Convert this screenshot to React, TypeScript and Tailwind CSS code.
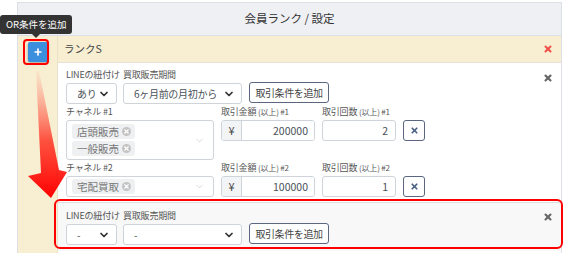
import React from 'react';
import { X, ChevronDown, Plus } from 'lucide-react';

const font = { fontFamily: '"Noto Sans CJK JP", "Noto Sans", sans-serif' };

function Label({ children }: { children: React.ReactNode }) {
  return <div className="text-[9px] leading-[12px] text-[#555] mb-[2px] whitespace-nowrap tracking-[-0.2px]">{children}</div>;
}

function Select({ value, w }: { value: string; w: string }) {
  return (
    <div className={`${w} h-[21px] border border-[#ced4da] rounded-[3px] bg-white flex items-center pl-[10px] pr-[6px] text-[10px] tracking-[-0.3px] text-[#495057]`}>
      <span className="flex-1 whitespace-nowrap">{value}</span>
      <ChevronDown size={12} strokeWidth={3.5} className="text-[#333] shrink-0" />
    </div>
  );
}

function AddButton() {
  return (
    <div className="w-[80px] h-[21px] border border-[#5b6680] rounded-[3px] bg-white flex items-center justify-center text-[10px] tracking-[-0.4px] text-[#444] whitespace-nowrap">
      取引条件を追加
    </div>
  );
}

function Tag({ text }: { text: string }) {
  return (
    <div className="h-[15px] bg-[#eef0f2] rounded-[3px] flex items-center gap-[3px] pl-[5px] pr-[4px] text-[10.5px] text-[#777] w-fit">
      <span>{text}</span>
      <span className="w-[9px] h-[9px] rounded-full bg-[#c4c4c4] flex items-center justify-center">
        <X size={7} strokeWidth={4} className="text-white" />
      </span>
    </div>
  );
}

function ChannelBox({ tags, h }: { tags: string[]; h: string }) {
  return (
    <div className={`w-[148px] ${h} border border-[#ced4da] rounded-[3px] bg-white flex items-center pl-[5px] pr-[8px] py-[3px]`}>
      <div className="flex-1 flex flex-col gap-[2px]">
        {tags.map((t) => (
          <Tag key={t} text={t} />
        ))}
      </div>
      <ChevronDown size={11} strokeWidth={1.5} className="text-[#c9c9c9]" />
    </div>
  );
}

function ConditionRow({ n, tags, amount, count, boxH }: { n: number; tags: string[]; amount: string; count: string; boxH: string }) {
  return (
    <div className="flex gap-[7px]">
      <div className="w-[148px]">
        <Label>チャネル #{n}</Label>
        <ChannelBox tags={tags} h={boxH} />
      </div>
      <div className="w-[94px]">
        <Label>
          取引金額 <span className="text-[8px]">(以上) #{n}</span>
        </Label>
        <div className="flex h-[21px] w-[94px] border border-[#ced4da] rounded-[3px] overflow-hidden">
          <div className="w-[20px] bg-[#f3f4f6] border-r border-[#ced4da] flex items-center justify-center text-[11px] text-[#444]">¥</div>
          <div className="flex-1 bg-white flex items-center justify-end pr-[6px] text-[10.5px] text-[#495057]">{amount}</div>
        </div>
      </div>
      <div className="w-[74px]">
        <Label>
          取引回数 <span className="text-[8px]">(以上) #{n}</span>
        </Label>
        <div className="h-[21px] w-[74px] border border-[#ced4da] rounded-[3px] bg-white flex items-center justify-end pr-[7px] text-[10.5px] text-[#495057]">{count}</div>
      </div>
      <div className="pt-[14px]">
        <div className="w-[22px] h-[21px] border border-[#5b6680] rounded-[3px] bg-white flex items-center justify-center">
          <X size={9} strokeWidth={4.5} className="text-[#4a6184]" />
        </div>
      </div>
    </div>
  );
}

function TopRow({ line, period }: { line: string; period: string }) {
  return (
    <div className="flex gap-[6px] items-end">
      <div className="w-[51px]">
        <Label>LINEの紐付け</Label>
        <Select value={line} w="w-[51px]" />
      </div>
      <div className="w-[119px]">
        <Label>買取販売期間</Label>
        <Select value={period} w="w-[119px]" />
      </div>
      <div className="mb-[1px] ml-[1px]">
        <AddButton />
      </div>
    </div>
  );
}

export default function App() {
  return (
    <div className="w-[564px] h-[253px] overflow-hidden bg-white relative" style={font}>
      <div className="ml-[17px] mr-[2px] mt-[2px] border-l border-t border-r border-[#dcdfe5]">
        <div className="h-[33px] bg-[#eff0f4] border-b border-[#dcdfe5] flex items-center justify-center text-[11.5px] text-[#333]">
          会員ランク / 設定
        </div>
        <div className="flex">
          <div className="w-[40px] h-[220px] bg-[#f8efd2] border-r border-[#e8e2cc] flex justify-center pt-[6px]">
            <div className="w-[20px] h-[20px] bg-[#3b8fdc] rounded-[2px] shadow-[0_1px_3px_rgba(0,0,0,0.35)] flex items-center justify-center">
              <Plus size={10} strokeWidth={4} className="text-white" />
            </div>
          </div>
          <div className="flex-1">
            <div className="h-[27px] bg-[#f8efd2] border-b border-[#e7e3d6] flex items-center justify-between pl-[6px] pr-[8px] text-[10.5px] text-[#444]">
              <span>ランクS</span>
              <X size={10} strokeWidth={5} className="text-[#f0524a]" />
            </div>
            <div className="relative pl-[8px] pt-[6px] pb-[5px] flex flex-col gap-[2px]">
              <X size={10} strokeWidth={5} className="absolute right-[8px] top-[10px] text-[#666]" />
              <TopRow line="あり" period="6ヶ月前の月初から" />
              <ConditionRow n={1} tags={['店頭販売', '一般販売']} amount="200000" count="2" boxH="h-[40px]" />
              <ConditionRow n={2} tags={['宅配買取']} amount="100000" count="1" boxH="h-[21px]" />
            </div>
            <div className="relative bg-[#f8f8f8] border-t border-[#dedede] pl-[8px] pt-[7px] pb-[6px]">
              <X size={10} strokeWidth={5} className="absolute right-[8px] top-[9px] text-[#666]" />
              <TopRow line="-" period="-" />
            </div>
          </div>
        </div>
      </div>

      {/* annotations */}
      <div className="absolute left-[23px] top-[39px] w-[26px] h-[26px] border-2 border-[#f00] rounded-[4px]" />
      <div className="absolute left-[54px] top-[199px] w-[509px] h-[50px] border-2 border-[#f00] rounded-[6px]" />
      <div className="absolute left-0 top-[15px] w-[72px] h-[19px] bg-[#333] rounded-[3px] flex items-center pl-[6px] text-[9.5px] text-white whitespace-nowrap">
        OR条件を追加
      </div>
      <div className="absolute left-[32px] top-[34px] w-0 h-0 border-l-[4px] border-r-[4px] border-t-[4px] border-l-transparent border-r-transparent border-t-[#333]" />
      <svg className="absolute left-0 top-0" width="100" height="253" viewBox="0 0 100 253">
        <defs>
          <linearGradient id="ag" x1="0" y1="70" x2="0" y2="198" gradientUnits="userSpaceOnUse">
            <stop offset="0" stopColor="#ff6b5a" stopOpacity="0.05" />
            <stop offset="0.55" stopColor="#ff2a1a" stopOpacity="0.8" />
            <stop offset="1" stopColor="#f00" />
          </linearGradient>
        </defs>
        <polygon points="36,71 39,71 59,170 67,172 51,198 28,176 41,173" fill="url(#ag)" />
      </svg>
    </div>
  );
}
